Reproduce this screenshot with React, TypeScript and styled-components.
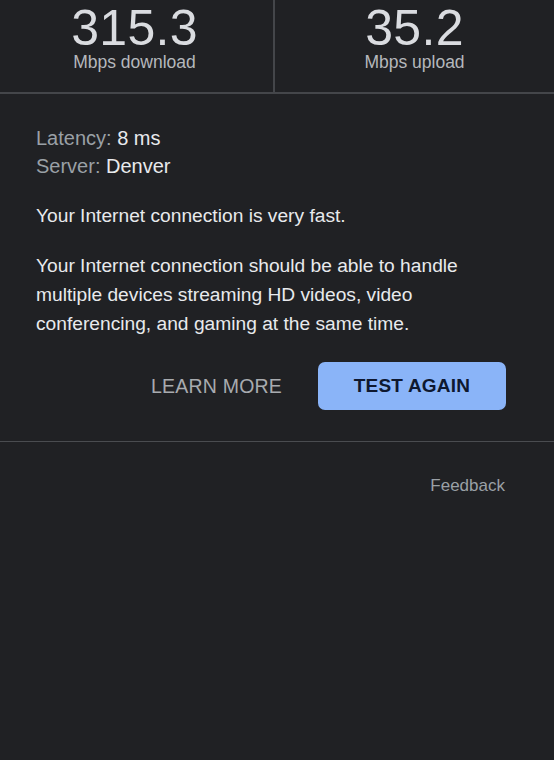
import React from "react";
import styled, { createGlobalStyle } from "styled-components";

const GlobalStyle = createGlobalStyle`
  html, body {
    margin: 0;
    padding: 0;
    background: #202124;
  }
  body {
    font-family: "Liberation Sans", Arial, sans-serif;
    -webkit-font-smoothing: antialiased;
  }
  * { box-sizing: border-box; }
`;

const Page = styled.div`
  width: 554px;
  min-height: 760px;
  background: #202124;
  color: #e8eaed;
  display: flex;
  flex-direction: column;
`;

const Stats = styled.div`
  display: grid;
  grid-template-columns: 275px 1fr;
  border-bottom: 2px solid #44464a;
`;

const StatCell = styled.div<{ $divider?: boolean; $shift?: number }>`
  height: 92px;
  padding-top: 4px;
  display: flex;
  flex-direction: column;
  align-items: center;
  padding-right: ${(p) => p.$shift ?? 0}px;
  border-right: ${(p) => (p.$divider ? "2px solid #44464a" : "none")};
`;

const StatValue = styled.div`
  font-size: 50px;
  line-height: 48px;
  color: #dadce0;
  letter-spacing: 0.3px;
`;

const StatLabel = styled.div`
  margin-top: 1px;
  font-size: 17.5px;
  line-height: 18px;
  color: #b5b8bc;
`;

const Details = styled.div`
  padding: 30px 48px 0 36px;
`;

const InfoLine = styled.div`
  font-size: 20px;
  line-height: 28px;
  color: #e8eaed;
`;

const InfoKey = styled.span`
  color: #9aa0a6;
`;

const Paragraph = styled.p`
  margin: 21px 0 0;
  font-size: 19.2px;
  line-height: 29px;
  color: #e8eaed;
`;

const Actions = styled.div`
  display: flex;
  justify-content: flex-end;
  align-items: center;
  gap: 36px;
  padding: 24px 48px 31px 0;
  border-bottom: 1px solid #4a4c50;
`;

const TextButton = styled.button`
  background: none;
  border: none;
  padding: 0;
  height: 48px;
  font-family: "Liberation Sans", Arial, sans-serif;
  font-size: 19.5px;
  color: #a8abaf;
  letter-spacing: 0.2px;
  cursor: pointer;
`;

const FilledButton = styled.button`
  width: 188px;
  height: 48px;
  border: none;
  border-radius: 7px;
  background: #8ab4f8;
  color: #0e1830;
  font-family: "Liberation Sans", Arial, sans-serif;
  font-size: 19px;
  font-weight: 700;
  letter-spacing: 0.2px;
  cursor: pointer;
`;

const Footer = styled.div`
  display: flex;
  justify-content: flex-end;
  padding: 34px 49px 0 0;
`;

const FeedbackLink = styled.span`
  font-size: 17px;
  line-height: 20px;
  color: #9aa0a6;
`;

export default function App() {
  return (
    <>
      <GlobalStyle />
      <Page>
        <Stats>
          <StatCell $divider $shift={4}>
            <StatValue>315.3</StatValue>
            <StatLabel>Mbps download</StatLabel>
          </StatCell>
          <StatCell>
            <StatValue>35.2</StatValue>
            <StatLabel>Mbps upload</StatLabel>
          </StatCell>
        </Stats>
        <Details>
          <InfoLine>
            <InfoKey>Latency:</InfoKey> 8 ms
          </InfoLine>
          <InfoLine>
            <InfoKey>Server:</InfoKey> Denver
          </InfoLine>
          <Paragraph>Your Internet connection is very fast.</Paragraph>
          <Paragraph>
            Your Internet connection should be able to handle multiple devices
            streaming HD videos, video conferencing, and gaming at the same
            time.
          </Paragraph>
        </Details>
        <Actions>
          <TextButton>LEARN MORE</TextButton>
          <FilledButton>TEST AGAIN</FilledButton>
        </Actions>
        <Footer>
          <FeedbackLink>Feedback</FeedbackLink>
        </Footer>
      </Page>
    </>
  );
}
